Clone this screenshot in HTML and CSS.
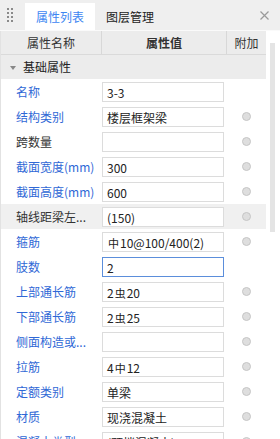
FILE: index.html
```html
<!DOCTYPE html>
<html lang="zh">
<head>
  <meta charset="UTF-8">
  <title>属性列表</title>
  <link rel="stylesheet" href="styles.css">
</head>
<body>
  <div class="panel">
    <div class="tabs">
      <svg class="grip" width="6" height="14" viewBox="0 0 6 14">
        <rect x="0" y="0" width="2" height="2"/><rect x="4" y="0" width="2" height="2"/>
        <rect x="0" y="4" width="2" height="2"/><rect x="4" y="4" width="2" height="2"/>
        <rect x="0" y="8" width="2" height="2"/><rect x="4" y="8" width="2" height="2"/>
        <rect x="0" y="12" width="2" height="2"/><rect x="4" y="12" width="2" height="2"/>
      </svg>
      <div class="tab active">属性列表</div>
      <div class="tab">图层管理</div>
      <svg class="close" width="9" height="9" viewBox="0 0 9 9">
        <path d="M0.5 0.5 L8.5 8.5 M8.5 0.5 L0.5 8.5" stroke="#9a9a9a" stroke-width="1.2"/>
      </svg>
    </div>

    <div class="content">
      <div class="grid">
        <div class="head">
          <div class="hc c-name">属性名称</div>
          <div class="hc c-val strong">属性值</div>
          <div class="hc c-add">附加</div>
        </div>
        <div class="section"><span class="caret"></span>基础属性</div>

        <div class="row"><div class="lbl blue">名称</div><div class="cell"><div class="val">3-3</div></div><div class="add"></div></div>
        <div class="row"><div class="lbl blue">结构类别</div><div class="cell"><div class="val">楼层框架梁</div></div><div class="add"><span class="dot"></span></div></div>
        <div class="row"><div class="lbl">跨数量</div><div class="cell"><div class="val"></div></div><div class="add"><span class="dot"></span></div></div>
        <div class="row"><div class="lbl blue">截面宽度(mm)</div><div class="cell"><div class="val">300</div></div><div class="add"><span class="dot"></span></div></div>
        <div class="row"><div class="lbl blue">截面高度(mm)</div><div class="cell"><div class="val">600</div></div><div class="add"><span class="dot"></span></div></div>
        <div class="row shaded"><div class="lbl">轴线距梁左...</div><div class="cell"><div class="val">(150)</div></div><div class="add"><span class="dot"></span></div></div>
        <div class="row"><div class="lbl blue">箍筋</div><div class="cell"><div class="val"><span class="bar">中</span>10@100/400(2)</div></div><div class="add"><span class="dot"></span></div></div>
        <div class="row"><div class="lbl blue">肢数</div><div class="cell"><div class="val focus">2</div></div><div class="add"></div></div>
        <div class="row"><div class="lbl blue">上部通长筋</div><div class="cell"><div class="val">2<span class="bar">虫</span>20</div></div><div class="add"><span class="dot"></span></div></div>
        <div class="row"><div class="lbl blue">下部通长筋</div><div class="cell"><div class="val">2<span class="bar">虫</span>25</div></div><div class="add"><span class="dot"></span></div></div>
        <div class="row"><div class="lbl blue">侧面构造或...</div><div class="cell"><div class="val"></div></div><div class="add"><span class="dot"></span></div></div>
        <div class="row"><div class="lbl blue">拉筋</div><div class="cell"><div class="val">4<span class="bar">中</span>12</div></div><div class="add"><span class="dot"></span></div></div>
        <div class="row"><div class="lbl blue">定额类别</div><div class="cell"><div class="val">单梁</div></div><div class="add"><span class="dot"></span></div></div>
        <div class="row"><div class="lbl blue">材质</div><div class="cell"><div class="val">现浇混凝土</div></div><div class="add"><span class="dot"></span></div></div>
        <div class="row"><div class="lbl blue">混凝土类型</div><div class="cell"><div class="val">(预拌混凝土)</div></div><div class="add"><span class="dot"></span></div></div>
      </div>
      <div class="scroll"><div class="thumb"></div></div>
    </div>
  </div>
</body>
</html>
```

FILE: styles.css
```css
html, body {
  margin: 0;
  padding: 0;
  height: 439px;
  overflow: hidden;
  background-color: #ffffff;
}
body {
  font-family: "Noto Sans CJK SC", "Noto Sans", sans-serif;
  font-size: 12px;
  color: #333333;
}
.panel {
  width: 280px;
  height: 439px;
  display: flex;
  flex-direction: column;
}

/* tab bar */
.tabs {
  height: 30px;
  background-color: #efefef;
  display: flex;
  align-items: flex-end;
  position: relative;
  border-bottom: 1px solid #fafafa;
}
.grip {
  fill: #8a8a8a;
  margin: 0 12px 8px 7px;
  align-self: flex-end;
}
.tab {
  height: 27px;
  line-height: 27px;
  padding: 0 11px;
  color: #222222;
}
.tab.active {
  background-color: #ffffff;
  color: #3d86f2;
}
.close {
  margin-left: auto;
  margin-right: 11px;
  align-self: center;
}

/* table */
.content {
  flex: 1;
  display: flex;
  overflow: hidden;
}
.grid {
  width: 266px;
  border-left: 1px solid #e2e2e2;
  box-sizing: border-box;
}
.head {
  display: flex;
  height: 23px;
  line-height: 23px;
  background-color: #ececec;
  border-bottom: 1px solid #dadada;
}
.hc {
  text-align: center;
  color: #333333;
}
.c-name {
  width: 100px;
  border-right: 1px solid #d8d8d8;
}
.c-val {
  width: 124px;
  border-right: 1px solid #d8d8d8;
}
.c-add {
  flex: 1;
}
.strong {
  font-weight: 600;
}
.section {
  height: 24px;
  line-height: 24px;
  background-color: #ececec;
  padding-left: 9px;
  color: #222222;
}
.caret {
  display: inline-block;
  width: 0;
  height: 0;
  border-left: 3px solid transparent;
  border-right: 3px solid transparent;
  border-top: 4px solid #888888;
  margin-right: 7px;
  vertical-align: 2px;
}
.row {
  display: flex;
  height: 25px;
  align-items: center;
}
.row.shaded {
  background-color: #f0f0f0;
}
.lbl {
  width: 100px;
  padding-left: 15px;
  box-sizing: border-box;
  color: #333333;
  white-space: nowrap;
  overflow: hidden;
}
.lbl.blue {
  color: #2f68d6;
}
.cell {
  width: 125px;
  padding: 0 2px 0 1px;
  box-sizing: border-box;
}
.val {
  height: 20px;
  line-height: 19px;
  border: 1px solid #dcdcdc;
  background-color: #ffffff;
  box-sizing: border-box;
  padding-left: 4px;
  color: #222222;
  white-space: nowrap;
  overflow: hidden;
}
.val.focus {
  border-color: #5b8edb;
}
.bar {
  font-size: 11px;
  margin: 0 1px;
}
.add {
  flex: 1;
  display: flex;
  justify-content: center;
  padding-left: 1px;
}
.dot {
  width: 7px;
  height: 7px;
  border-radius: 50%;
  background-color: #dedede;
  border: 1px solid #c6c6c6;
}

/* scrollbar */
.scroll {
  flex: 1;
  padding: 12px 4px 0 4px;
}
.thumb {
  width: 5px;
  height: 189px;
  background-color: #e4e4e4;
}
```
